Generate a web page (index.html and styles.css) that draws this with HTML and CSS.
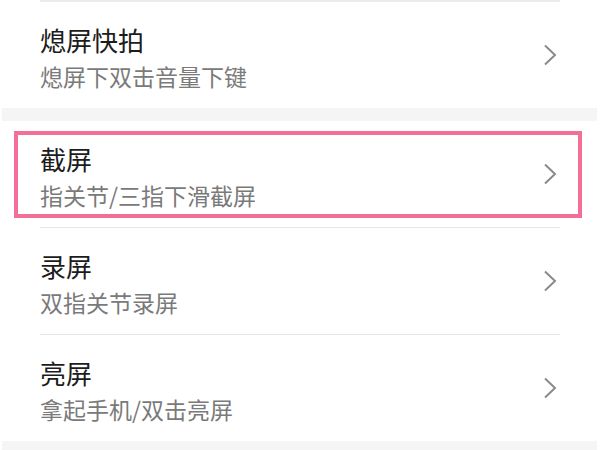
FILE: index.html
```html
<!DOCTYPE html>
<html lang="zh-CN">
<head>
<meta charset="utf-8">
<link rel="stylesheet" href="styles.css">
</head>
<body>
<div class="page">
  <section class="group">
    <div class="divider top"></div>
    <div class="row">
      <div class="texts">
        <div class="title">熄屏快拍</div>
        <div class="sub">熄屏下双击音量下键</div>
      </div>
      <svg class="chev" width="14" height="22" viewBox="0 0 14 22"><polyline points="2,1.5 12,11 2,20.5" fill="none" stroke="#8a8a8a" stroke-width="2"/></svg>
    </div>
  </section>
  <div class="band"></div>
  <section class="group">
    <div class="row highlighted">
      <div class="texts">
        <div class="title">截屏</div>
        <div class="sub">指关节/三指下滑截屏</div>
      </div>
      <svg class="chev" width="14" height="22" viewBox="0 0 14 22"><polyline points="2,1.5 12,11 2,20.5" fill="none" stroke="#8a8a8a" stroke-width="2"/></svg>
      <div class="mark"></div>
    </div>
    <div class="divider"></div>
    <div class="row">
      <div class="texts">
        <div class="title">录屏</div>
        <div class="sub">双指关节录屏</div>
      </div>
      <svg class="chev" width="14" height="22" viewBox="0 0 14 22"><polyline points="2,1.5 12,11 2,20.5" fill="none" stroke="#8a8a8a" stroke-width="2"/></svg>
    </div>
    <div class="divider"></div>
    <div class="row">
      <div class="texts">
        <div class="title">亮屏</div>
        <div class="sub">拿起手机/双击亮屏</div>
      </div>
      <svg class="chev" width="14" height="22" viewBox="0 0 14 22"><polyline points="2,1.5 12,11 2,20.5" fill="none" stroke="#8a8a8a" stroke-width="2"/></svg>
    </div>
  </section>
  <div class="band"></div>
</div>
</body>
</html>
```
FILE: styles.css
```css
html, body {
  margin: 0;
  padding: 0;
  background: #ffffff;
}
body {
  font-family: "Noto Sans CJK SC", "Noto Sans", sans-serif;
  width: 600px;
  height: 450px;
  overflow: hidden;
}
.page {
  display: flex;
  flex-direction: column;
  width: 600px;
}
.group {
  display: flex;
  flex-direction: column;
}
.divider {
  height: 1px;
  margin: 0 40px;
  background: #e6e6e6;
}
.divider.top {
  height: 2px;
  background: #ececec;
}
.band {
  height: 13px;
  margin: 0 3px 0 2px;
  background: #f5f5f5;
}
.row {
  position: relative;
  height: 106px;
  box-sizing: border-box;
  padding: 0 43px 0 40px;
  display: flex;
  align-items: center;
  justify-content: space-between;
}
.texts {
  display: flex;
  flex-direction: column;
  gap: 4px;
  margin-top: 4px;
}
.title {
  font-size: 26px;
  line-height: 34px;
  color: #1c1c1c;
}
.sub {
  font-size: 23px;
  line-height: 30px;
  color: #7a7a7a;
}
.mark {
  position: absolute;
  left: 14px;
  right: 18px;
  top: 10px;
  bottom: 9px;
  border: 4px solid #f36f97;
}
```
